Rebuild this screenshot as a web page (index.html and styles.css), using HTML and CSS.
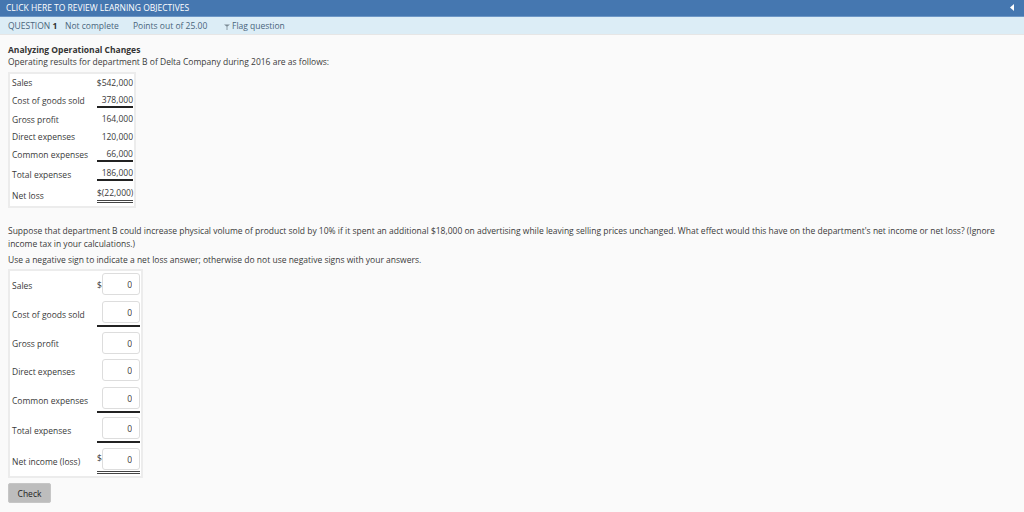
FILE: index.html
```html
<!DOCTYPE html>
<html lang="en">
<head>
<meta charset="utf-8">
<title>Question 1</title>
<link rel="stylesheet" href="styles.css">
</head>
<body>
<header class="topbar">
  <span>CLICK HERE TO REVIEW LEARNING OBJECTIVES</span>
  <svg class="caret" width="5" height="7" viewBox="0 0 5 7"><path d="M4 0V7L0 3.5Z" fill="#fff"/></svg>
</header>
<div class="infobar">
  <span class="q">QUESTION <b>1</b></span>
  <span class="status">Not complete</span>
  <span class="points">Points out of 25.00</span>
  <span class="flag">
    <svg class="flag-icon" width="6" height="6" viewBox="0 0 6 6"><path d="M0 .5H6L3.4 2.6V6H2.6V2.6Z" fill="#7a8a94"/></svg>
    <span>Flag question</span>
  </span>
</div>
<main class="content">
  <h1 class="title">Analyzing Operational Changes</h1>
  <p class="lead">Operating results for department B of Delta Company during 2016 are as follows:</p>
  <table class="data given">
    <tr class="r17"><td class="lab">Sales</td><td class="num">$542,000</td></tr>
    <tr class="r19"><td class="lab">Cost of goods sold</td><td class="num"><span class="val single">378,000</span></td></tr>
    <tr class="r18"><td class="lab">Gross profit</td><td class="num">164,000</td></tr>
    <tr class="r17"><td class="lab">Direct expenses</td><td class="num">120,000</td></tr>
    <tr class="r19"><td class="lab">Common expenses</td><td class="num"><span class="val single">66,000</span></td></tr>
    <tr class="r20"><td class="lab">Total expenses</td><td class="num"><span class="val single">186,000</span></td></tr>
    <tr class="r22"><td class="lab">Net loss</td><td class="num"><span class="val double">$(22,000)</span></td></tr>
  </table>
  <p class="para">Suppose that department B could increase physical volume of product sold by 10% if it spent an additional $18,000 on advertising while leaving selling prices unchanged. What effect would this have on the department's net income or net loss? (Ignore income tax in your calculations.)</p>
  <p class="note">Use a negative sign to indicate a net loss answer; otherwise do not use negative signs with your answers.</p>
  <table class="data answers">
    <tr class="h28"><td class="lab">Sales</td><td class="ans"><div class="cell"><span class="dollar">$</span><input value="0"></div></td></tr>
    <tr class="h31"><td class="lab">Cost of goods sold</td><td class="ans"><div class="cell single"><input value="0"></div></td></tr>
    <tr class="h27"><td class="lab">Gross profit</td><td class="ans"><div class="cell"><input value="0"></div></td></tr>
    <tr class="h28"><td class="lab">Direct expenses</td><td class="ans"><div class="cell"><input value="0"></div></td></tr>
    <tr class="h30"><td class="lab">Common expenses</td><td class="ans"><div class="cell single"><input value="0"></div></td></tr>
    <tr class="h31"><td class="lab">Total expenses</td><td class="ans"><div class="cell single"><input value="0"></div></td></tr>
    <tr class="h30"><td class="lab">Net income (loss)</td><td class="ans"><div class="cell double"><span class="dollar">$</span><input value="0"></div></td></tr>
  </table>
  <button class="check" type="button">Check</button>
</main>
</body>
</html>
```
FILE: styles.css
```css
* { box-sizing: border-box; }
html, body { margin: 0; height: 512px; overflow: hidden; }
body { background: #fafafa; font: 8.5px/13px "Open Sans", sans-serif; color: #3a3a3a; }

.topbar { height: 17px; background: #4577b0; color: #fff; padding: 0 9px 2px 6px; display: flex; align-items: center; justify-content: space-between; border-bottom: 1px solid #6d97c6; }
.infobar { height: 18px; background: #dcedf6; color: #49657c; padding-left: 8px; display: flex; align-items: center; border-bottom: 1px solid #e6e6e6; }
.q { width: 57px; }
.q b { color: #333; }
.status { width: 68px; }
.points { width: 91px; }
.flag { display: flex; align-items: center; gap: 2px; }
.flag-icon { margin-top: 3px; }

.content { padding: 8px 8px 0; }
.title { margin: 0; font-size: 8.5px; line-height: 13px; font-weight: 700; color: #333; }
.lead { margin: -1px 0 4px; }

.data { border-collapse: separate; border-spacing: 0; background: #fff; border: 2px solid #ececec; }
.data td { padding: 0; }
.given { width: 128px; }
.given .lab { padding-left: 2px; }
.given .num { text-align: right; padding-right: 1px; vertical-align: top; padding-top: 2px; }
.r17 { height: 17px; } .r18 { height: 18px; } .r19 { height: 19px; } .r20 { height: 20px; } .r22 { height: 22px; }
.val { display: inline-block; width: 36px; }
.single { border-bottom: 2px solid #222; }
.double { border-bottom: 3px double #444; }
.given .double { padding-bottom: 1px; }

.para { margin: 16px 0 0; width: 1000px; }
.note { margin: 3px 0 3px; }

.answers { width: 135px; }
.answers .lab { padding-left: 2px; width: 87px; }
.answers .ans { vertical-align: top; }
.h27 { height: 27px; } .h28 { height: 28px; } .h30 { height: 30px; } .h31 { height: 31px; }
.cell { display: flex; align-items: center; width: 43px; padding: 2px 0; }
.cell.double { padding-bottom: 1px; }
.dollar { width: 5px; }
.cell.double .dollar { margin-bottom: 3px; }
input { display: block; width: 38px; height: 22px; margin-left: auto; border: 1px solid #ddd; border-radius: 3px; background: #fff; font: 8.5px "Open Sans", sans-serif; color: #3a3a3a; text-align: right; padding: 0 7px 0 0; }

.check { display: block; margin: 5px 0 0; width: 43px; height: 20px; background: #bdbdbd; border: 1px solid #c6c6c6; border-radius: 2px; font: 8.5px "Open Sans", sans-serif; color: #222; padding: 0; }
```
